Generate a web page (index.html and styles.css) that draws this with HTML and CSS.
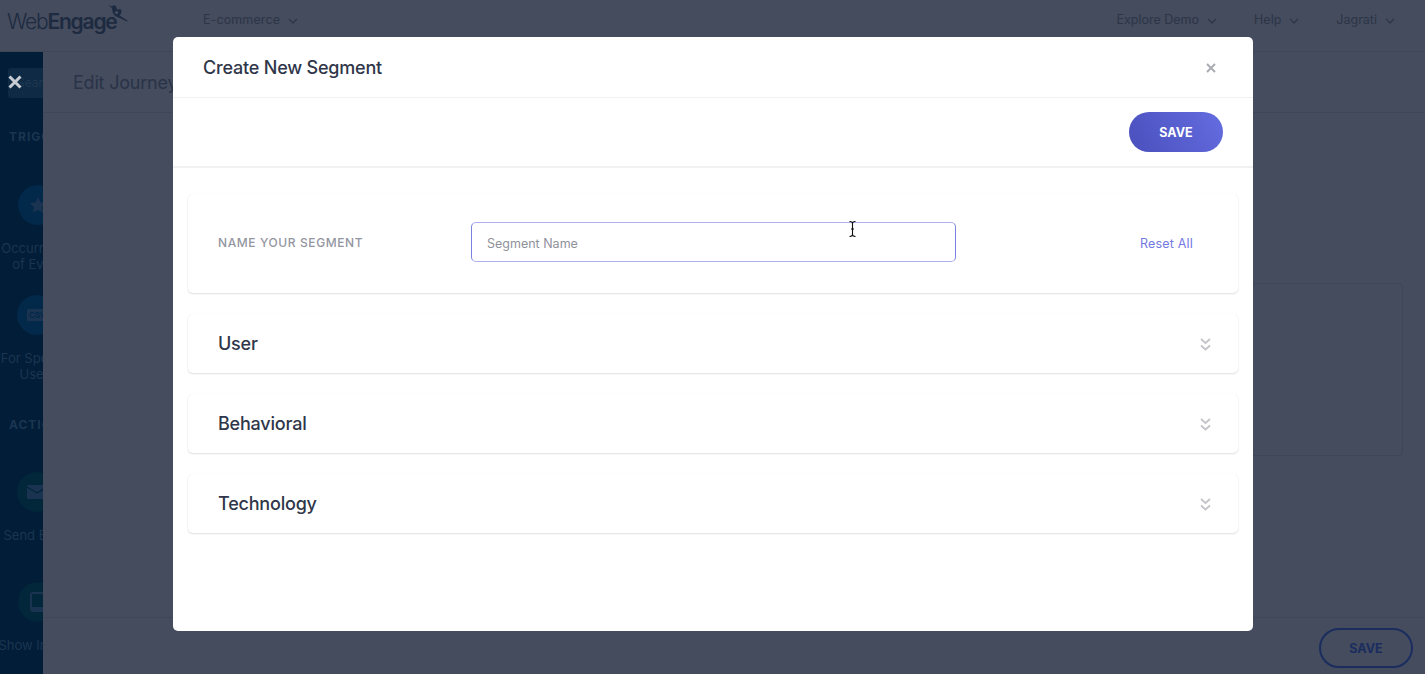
FILE: index.html
```html
<!DOCTYPE html>
<html lang="en">
<head>
<meta charset="utf-8">
<title>Create New Segment</title>
<link rel="stylesheet" href="styles.css">
</head>
<body>
<div class="page">
  <header class="topbar">
    <div class="logo">
      <span class="logo-web">Web</span><span class="logo-engage">Engage</span>
      <svg class="logo-bird" width="22" height="20" viewBox="0 0 22 20"><path d="M1 1 L5 2.500 C6 .8 8 .8 9 2.500 L10.500 6 C12 4.400 14.500 4.800 14.500 7.200 C14.500 9 13.500 10.500 12.500 11.500 L20.500 16.500 L20 17.500 L10.500 13 C8 12.500 6 10 5.500 7.500 L5 4 Z" fill="#1d2a40"/><circle cx="9.600" cy="8.600" r="1.700" fill="#444c5e"/></svg>
    </div>
    <nav class="nav-left"><span class="nav-item">E-commerce <svg class="caret" width="10" height="6" viewBox="0 0 10 6"><path d="M1 1l4 4 4-4" fill="none" stroke="currentColor" stroke-width="1.300"/></svg></span></nav>
    <nav class="nav-right">
      <span class="nav-item">Explore Demo <svg class="caret" width="10" height="6" viewBox="0 0 10 6"><path d="M1 1l4 4 4-4" fill="none" stroke="currentColor" stroke-width="1.300"/></svg></span>
      <span class="nav-item">Help <svg class="caret" width="10" height="6" viewBox="0 0 10 6"><path d="M1 1l4 4 4-4" fill="none" stroke="currentColor" stroke-width="1.300"/></svg></span>
      <span class="nav-item">Jagrati <svg class="caret" width="10" height="6" viewBox="0 0 10 6"><path d="M1 1l4 4 4-4" fill="none" stroke="currentColor" stroke-width="1.300"/></svg></span>
    </nav>
  </header>
  <div class="body">
    <aside class="sidebar">
      <div class="side-inner">
        <div class="search"><span class="search-text">Search</span></div>
        <div class="side-head">TRIGGERS</div>
        <div class="side-item">
          <span class="circle circle-blue"><svg width="18" height="18" viewBox="0 0 18 18"><path d="M9 1l2.500 5.300 5.700.8-4.100 4 1 5.700L9 14.100l-5.100 2.700 1-5.700-4.100-4 5.700-.8z" fill="#1a3350"/></svg></span>
          <span class="side-label">Occurrence<br>of Event</span>
        </div>
        <div class="side-item side-item-2">
          <span class="circle circle-blue"><span class="csv">CSV</span></span>
          <span class="side-label">For Specific<br>Users</span>
        </div>
        <div class="side-head side-head-2">ACTIONS</div>
        <div class="side-item side-item-3">
          <span class="circle circle-teal"><svg width="20" height="14" viewBox="0 0 20 14"><rect width="20" height="14" rx="1" fill="#1a3350"/><path d="M0 2l10 6 10-6" fill="none" stroke="#02263a" stroke-width="1.400"/></svg></span>
          <span class="side-label">Send Email</span>
        </div>
        <div class="side-item side-item-4">
          <span class="circle circle-teal"><svg width="16" height="20" viewBox="0 0 16 20"><rect x="1" y="1" width="14" height="18" rx="2" fill="#02263a" stroke="#1a3350" stroke-width="2"/><rect x="1" y="15" width="14" height="4" fill="#1a3350"/></svg></span>
          <span class="side-label">Show In-app</span>
        </div>
      </div>
      <svg class="side-close" width="14" height="14" viewBox="0 0 14 14"><path d="M1.500 1.500l11 11M12.500 1.500l-11 11" stroke="#c8ccd3" stroke-width="3"/></svg>
    </aside>
    <main class="main">
      <div class="main-head">Edit Journey</div>
      <div class="main-content"><div class="panel"></div></div>
      <footer class="main-foot"><button class="ghost-btn" type="button">SAVE</button></footer>
    </main>
  </div>
</div>

<section class="modal">
  <header class="modal-head">
    <h1 class="modal-title">Create New Segment</h1>
    <svg class="modal-close" width="10" height="10" viewBox="0 0 10 10"><path d="M1 1l8 8M9 1l-8 8" stroke="#a9acb3" stroke-width="2"/></svg>
  </header>
  <div class="modal-actions"><button class="save-btn" type="button">SAVE</button></div>
  <div class="modal-body">
    <div class="card card-name">
      <label class="name-label" for="seg">NAME YOUR SEGMENT</label>
      <input class="name-input" id="seg" type="text" placeholder="Segment Name">
      <a class="reset" href="#">Reset All</a>
    </div>
    <div class="card card-row"><span class="row-title">User</span>
      <svg class="chev" width="11" height="13" viewBox="0 0 11 13"><path d="M1 1l4.500 4 4.500-4M1 7.500l4.500 4 4.500-4" fill="none" stroke="#c3c4c9" stroke-width="1.700"/></svg></div>
    <div class="card card-row"><span class="row-title">Behavioral</span>
      <svg class="chev" width="11" height="13" viewBox="0 0 11 13"><path d="M1 1l4.500 4 4.500-4M1 7.500l4.500 4 4.500-4" fill="none" stroke="#c3c4c9" stroke-width="1.700"/></svg></div>
    <div class="card card-row"><span class="row-title">Technology</span>
      <svg class="chev" width="11" height="13" viewBox="0 0 11 13"><path d="M1 1l4.500 4 4.500-4M1 7.500l4.500 4 4.500-4" fill="none" stroke="#c3c4c9" stroke-width="1.700"/></svg></div>
  </div>
</section>
<svg class="ibeam" width="7" height="16" viewBox="0 0 7 16"><path d="M0.500 .5c1.500 0 3 .5 3 2v11c0 1.500-1.500 2-3 2M6.500 .5c-1.500 0-3 .5-3 2v11c0 1.500 1.500 2 3 2M2 8h3" fill="none" stroke="#111" stroke-width="1.100"/></svg>
</body>
</html>
```
FILE: styles.css
```css
* { box-sizing: border-box; }
html, body { margin: 0; height: 100%; overflow: hidden; }
body { font-family: Inter, "Liberation Sans", sans-serif; background: #444c5e; color: #2f3649; }

.page { width: 1425px; height: 674px; display: flex; flex-direction: column; background: #444c5e; }
.topbar { height: 52px; flex: none; display: flex; align-items: flex-start; border-bottom: 1px solid #3e4658; padding: 12px 30px 0 0; color: #2d3547; font-size: 12.5px; line-height: 16px; }
.logo { position: relative; width: 203px; height: 30px; padding-left: 7px; margin-top: -3px; font-size: 21px; line-height: 26px; color: #1d2a40; letter-spacing: -1.200px; flex: none; }
.logo-web { font-weight: 300; }
.logo-engage { font-weight: 600; }
.logo-bird { position: absolute; left: 107px; top: -5px; }
.nav-left { flex: 1; }
.nav-right { display: flex; gap: 37px; }
.nav-item { display: inline-flex; align-items: center; gap: 8px; white-space: nowrap; }
.nav-left .nav-item { letter-spacing: .1px; }
.caret { margin-top: 2px; }

.body { flex: 1; display: flex; min-height: 0; }
.sidebar { position: relative; width: 43px; flex: none; background: #021d38; overflow: hidden; }
.side-inner { width: 75px; display: flex; flex-direction: column; align-items: center; padding-top: 16px; }
.search { width: 64px; height: 30px; background: #0f2a45; border-radius: 3px; font-size: 12px; color: #1e3850; padding: 7px 0 0 9px; align-self: flex-start; margin-left: 8px; }
.search-text { display: block; }
.side-head { align-self: flex-start; margin: 31px 0 0 9px; font-size: 12px; font-weight: 700; letter-spacing: 1px; color: #1b3550; line-height: 16px; }
.side-head-2 { margin-top: 35px; }
.side-item { display: flex; flex-direction: column; align-items: center; margin-top: 40px; }
.side-item-2 { margin-top: 23px; }
.side-item-3 { margin-top: 39px; }
.side-item-4 { margin-top: 39px; }
.circle { width: 40px; height: 40px; border-radius: 50%; display: flex; align-items: center; justify-content: center; flex: none; }
.circle-blue { background: #02284a; }
.circle-teal { background: #02263a; }
.csv { background: #1a3350; color: #02284a; font-size: 8px; font-weight: 700; line-height: 12px; padding: 0 2px; border-radius: 1px; }
.side-label { margin-top: 15px; font-size: 13px; line-height: 16px; text-align: center; color: #1b3550; white-space: nowrap; }
.side-close { position: absolute; left: 8px; top: 23px; }

.main { flex: 1; display: flex; flex-direction: column; min-width: 0; }
.main-head { height: 61px; flex: none; padding: 20px 0 0 30px; font-size: 18px; letter-spacing: -.2px; line-height: 22px; color: #2a3347; border-bottom: 1px solid #3e4658; white-space: nowrap; }
.main-content { flex: 1; display: flex; justify-content: flex-end; padding: 170px 22px 0 0; }
.panel { width: 154px; height: 173px; border: 1px solid #3e4658; border-radius: 4px; }
.main-foot { height: 57px; flex: none; border-top: 1px solid #3e4658; display: flex; justify-content: flex-end; align-items: flex-start; padding: 10px 12px 0 0; }
.ghost-btn { width: 94px; height: 40px; border: 2px solid #1b2d5f; border-radius: 20px; background: none; color: #1b2d5f; font: 700 12.500px Inter, "Liberation Sans", sans-serif; }

.modal { position: absolute; left: 173px; top: 37px; width: 1080px; height: 594px; background: #fff; border-radius: 5px; display: flex; flex-direction: column; }
.modal-head { height: 61px; flex: none; display: flex; align-items: center; justify-content: space-between; padding: 0 37px 0 30px; border-bottom: 1px solid #f1f1f3; }
.modal-title { margin: 1px 0 0; font-size: 18px; font-weight: 450; letter-spacing: -.2px; color: #2f3649; line-height: 22px; }
.modal-close { margin-top: 1px; }
.modal-actions { height: 70px; flex: none; display: flex; justify-content: flex-end; align-items: flex-start; padding: 14px 30px 0 0; border-bottom: 2px solid #f1f1f3; }
.save-btn { width: 94px; height: 40px; border: 0; border-radius: 20px; background: linear-gradient(60deg, #4a4fbc, #646de0); color: #fff; font: 700 12.500px Inter, "Liberation Sans", sans-serif; }
.modal-body { padding: 26px 15px 0; display: flex; flex-direction: column; gap: 21px; }
.card { display: flex; align-items: center; background: #fff; border-radius: 5px; box-shadow: 0 1px 2px rgba(30, 35, 60, .14), 0 0 1px rgba(30, 35, 60, .06); padding: 0 30px; }
.card-name { height: 99px; }
.card-row { height: 59px; justify-content: space-between; padding-right: 27px; }
.name-label { width: 253px; flex: none; margin-top: -2px; font-size: 12px; font-weight: 500; letter-spacing: .6px; color: #93959f; }
.name-input { width: 485px; height: 40px; flex: none; border: 1px solid #adb0ee; border-left-color: #7c82e0; border-right-color: #7c82e0; border-radius: 5px; padding: 4px 15px 0; font: 12.500px Inter, "Liberation Sans", sans-serif; outline: 0; color: #2f3649; margin-top: -4px; }
.name-input::placeholder { color: #8f919b; opacity: 1; }
.reset { margin-left: auto; margin-right: 15px; font-size: 12.500px; letter-spacing: .2px; color: #7479e2; text-decoration: none; }
.row-title { font-size: 18px; font-weight: 450; letter-spacing: -.2px; color: #2f3649; line-height: 22px; }
.chev { margin-top: 1px; }
.ibeam { position: absolute; left: 849px; top: 221px; }
```
